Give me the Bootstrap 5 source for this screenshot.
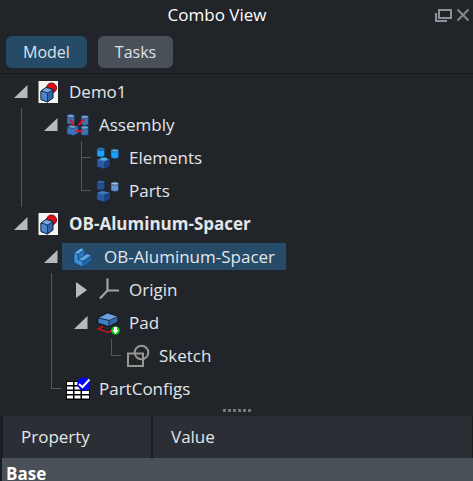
<!DOCTYPE html>
<html lang="en" data-bs-theme="dark">
<head>
<meta charset="utf-8">
<meta name="viewport" content="width=device-width, initial-scale=1">
<title>Combo View</title>
<link href="https://cdn.jsdelivr.net/npm/bootstrap@5.3.0/dist/css/bootstrap.min.css" rel="stylesheet">
<style>
body { background: #212529; color: #e3e6e9; font: 17px/24px "Open Sans", "Noto Sans", sans-serif; }
.dock-title { height: 30px; padding: 0 3px 0 0; }
.dock-title h1 { font-size: 17px; line-height: 24px; font-weight: 400; }
.bare { background: none; border: 0; padding: 0; line-height: 0; }
.tabs { padding: 6px 6px 5px; gap: 11px; border-bottom: 1px solid #171a1d; }
.tabs .btn { height: 32px; padding: 0 17px; border: 0; border-radius: 6px; background: #495057; color: #dee2e6; font-size: 16px; line-height: 32px; }
.tabs .btn.active { background: #264b69; color: #dee2e6; }
.tree { padding: 1px 6px 0; }
.node { height: 33px; }
.cell { width: 30px; height: 33px; flex: none; }
.rail { background: linear-gradient(#54585c, #54585c) 15px 0 / 1px 100% no-repeat; }
.tee { background: linear-gradient(#54585c, #54585c) 15px 0 / 1px 100% no-repeat, linear-gradient(#54585c, #54585c) 15px 16px / 10px 1px no-repeat; }
.end { background: linear-gradient(#54585c, #54585c) 15px 0 / 1px 17px no-repeat, linear-gradient(#54585c, #54585c) 15px 16px / 10px 1px no-repeat; }
.item { gap: 9px; }
.item svg { width: 24px; height: 24px; flex: none; }
.picked { background: #264b69; height: 27px; padding: 0 11px 0 5px; margin-left: -4px; }
.picked svg { margin-left: 4px; }
.grip { gap: 2px; height: 11px; }
.grip i { width: 3px; height: 3px; background: #73777b; }
.props { border-collapse: separate; border-spacing: 0; table-layout: fixed; border-left: 2px solid #1a1d20; }
.props thead th { height: 42px; padding: 0 18px; font-weight: 400; background: #2b2f35; border-left: 1px solid #1a1d20; border-right: 1px solid #1a1d20; }
.props thead th:first-child { width: 150px; }
.props tbody th { height: 32px; padding: 0 4px; background: #495057; color: #fff; font-weight: 700; }
</style>
<script src="https://cdn.jsdelivr.net/npm/bootstrap@5.3.0/dist/js/bootstrap.bundle.min.js"></script>
</head>
<body class="vh-100 overflow-hidden">
<svg class="d-none" aria-hidden="true">
  <symbol id="open" viewBox="0 0 14 14"><path d="M13.500 0V13H0z" fill="#b7babd"/></symbol>
  <symbol id="closed" viewBox="0 0 11 16"><path d="M0 0L11 8 0 16z" fill="#b7babd"/></symbol>
  <symbol id="doc" viewBox="0 0 24 24">
    <path d="M2.500 1H22V23H2.500z" fill="#f3f3f1"/>
    <circle cx="15.500" cy="8" r="5" fill="#db0c12" stroke="#7c0a12"/>
    <path d="M5 11L10 7.500 17 9.500V18L11.500 22 5 19.500z" fill="#3464a4" stroke="#0c1e3a"/>
    <path d="M5 11L10 7.500 17 9.500 11.500 13z" fill="#7aa7d8" stroke="#0c1e3a" stroke-width=".7"/>
    <path d="M11.500 13V22L5 19.500V11z" fill="#4a86cb" stroke="#0c1e3a" stroke-width=".7"/>
  </symbol>
  <symbol id="asm" viewBox="0 0 24 24">
    <g fill="#3f72b4" stroke="#16335c" stroke-width=".6">
      <path d="M1 3V10.500Q5 12.500 8.500 10.500V3z"/><ellipse cx="4.750" cy="3" rx="3.750" ry="1.800" fill="#729fcf"/>
      <path d="M15 4V11.500Q19 13.500 22.500 11.500V4z"/><ellipse cx="18.750" cy="4" rx="3.750" ry="1.800" fill="#729fcf"/>
      <path d="M15 14.500V21.500Q19 23.500 22.500 21.500V14.500z"/><ellipse cx="18.750" cy="14.500" rx="3.750" ry="1.800" fill="#729fcf"/>
      <path d="M1 14L5 12 12.500 13.500V20L7.500 22.500 1 21z"/><path d="M1 14L5 12 12.500 13.500 7.500 15.500z" fill="#729fcf"/>
    </g>
    <path d="M4.500 6.500L7.500 12.500M18 6.500L12.500 12M9.500 17.500L16.500 18.500" stroke="#e0141e" stroke-width="2"/>
  </symbol>
  <symbol id="block" viewBox="0 0 24 24">
    <path d="M1 14L6 12 13.500 13.500V20L8 22.800 1 20.800z" fill="#2a5ba2" stroke="#16335c" stroke-width=".6"/>
    <path d="M1 14L6 12 13.500 13.500 8 15.800z" fill="#4079c2"/>
    <path d="M8 15.800V22.500L13.500 20V13.500z" fill="#1d4480"/>
  </symbol>
  <symbol id="elements" viewBox="0 0 24 24">
    <g stroke="#163f70" stroke-width=".6">
      <path d="M1 3V10Q5 12 8.500 10V3z" fill="#1ba4ff"/><ellipse cx="4.750" cy="3" rx="3.750" ry="1.600" fill="#3d6fa8"/>
      <path d="M15 4.500V11.500Q19 13.500 22.500 11.500V4.500z" fill="#1ba4ff"/><ellipse cx="18.750" cy="4.500" rx="3.750" ry="1.600" fill="#5aa8dd"/>
    </g>
    <use href="#block"/>
    <ellipse cx="8" cy="13" rx="3.500" ry="1.400" fill="#46b4e8"/>
  </symbol>
  <symbol id="parts" viewBox="0 0 24 24">
    <g stroke="#16335c" stroke-width=".6">
      <path d="M1 3V10Q5 12 8.500 10V3z" fill="#24508c"/><ellipse cx="4.750" cy="3" rx="3.750" ry="1.600" fill="#3565a4"/>
      <path d="M15 4.500V11.500Q19 13.500 22.500 11.500V4.500z" fill="#6795cb"/><ellipse cx="18.750" cy="4.500" rx="3.750" ry="1.600" fill="#9dbde0"/>
    </g>
    <use href="#block"/>
  </symbol>
  <symbol id="body" viewBox="0 0 24 24">
    <g stroke="#123f70" stroke-width=".6" stroke-linejoin="round">
      <path d="M3 8L10 3 13.500 4.500V10L16 8.500 20.500 10.500V16L12 22 3 17.500z" fill="#2b72b8"/>
      <path d="M3 8L10 3 13.500 4.500 7 9.500z" fill="#69aae5"/>
      <path d="M7 9.500L13.500 4.500V10L7 14.500z" fill="#2f78c0"/>
      <path d="M7 14.500L16 8.500 20.500 10.500 12 16.500z" fill="#5ea3e2"/>
      <path d="M3 8L7 9.500V14.500L12 16.500V22L3 17.500z" fill="#3d8fdc"/>
      <path d="M12 16.500L20.500 10.500V16L12 22z" fill="#2566a8"/>
    </g>
  </symbol>
  <symbol id="origin" viewBox="0 0 24 24"><path d="M11.500 .500V12.500H23M11.500 12.500L4 20.500" fill="none" stroke="#a3a29e" stroke-width="2.200"/></symbol>
  <symbol id="pad" viewBox="0 0 24 24">
    <path d="M7 15.500L2 18 12 21.500 19 18" fill="none" stroke="#cc1018" stroke-width="1.500"/>
    <path d="M2 7L11.500 2 22 5.500V11L13 15.500 2 12z" fill="#3465a4" stroke="#0b1521"/>
    <path d="M2 7L11.500 2 22 5.500 13 9.500z" fill="#6da0dc" stroke="#0b1521" stroke-width=".7"/>
    <path d="M13 9.500V15.500L2 12V7z" fill="#427fc9" stroke="#0b1521" stroke-width=".7"/>
    <circle cx="19.500" cy="19.500" r="4.300" fill="#12c91a"/><path d="M18 16H21V19H22.500L19.500 23 16.500 19H18z" fill="#fff"/>
  </symbol>
  <symbol id="sketch" viewBox="0 0 24 24"><path d="M2 9.500H17V22H2z" fill="none" stroke="#969692" stroke-width="2"/><circle cx="15.500" cy="8.500" r="6.800" fill="none" stroke="#969692" stroke-width="2"/></symbol>
  <symbol id="sheet" viewBox="0 0 24 24">
    <path d="M0 4H24V23H0z" fill="#000"/>
    <path d="M1 5h6v3H1zM8.500 5h6v3h-6zM16 5h7v3h-7zM1 9.500h6v3H1zM8.500 9.500h6v3h-6zM16 9.500h7v3h-7zM1 14h6v3H1zM8.500 14h6v3h-6zM16 14h7v3h-7zM1 18.500h6v3H1zM8.500 18.500h6v3h-6zM16 18.500h7v3h-7z" fill="#fff"/>
    <path d="M12 3L16 .500 24 1.500V12L19 14 14 12.500 11 8z" fill="#0505f5"/><path d="M13 7L16.500 10 23.500 2.500" fill="none" stroke="#fff" stroke-width="2"/>
  </symbol>
</svg>

<header class="dock-title d-flex align-items-center">
  <h1 class="flex-grow-1 text-center m-0">Combo View</h1>
  <button class="bare me-1" aria-label="Float panel"><svg width="18" height="18" fill="none" stroke="#8b9297"><path d="M5 4H17V12H5z" stroke-width="2"/><path d="M2 7V15H13" stroke-width="2"/></svg></button>
  <button class="bare" aria-label="Close panel"><svg width="14" height="14" stroke="#83888b" stroke-width="2"><path d="M1.500 1.500L12.500 12.500M12.500 1.500L1.500 12.500"/></svg></button>
</header>
<nav class="tabs d-flex" aria-label="Panels">
  <button class="btn active">Model</button>
  <button class="btn">Tasks</button>
</nav>

<main class="tree text-nowrap">
  <div class="node d-flex align-items-center"><button class="cell bare" aria-label="Collapse Demo1"><svg width="14" height="14"><use href="#open"/></svg></button><div class="item d-flex align-items-center"><svg><use href="#doc"/></svg>Demo1</div></div>
  <div class="node d-flex align-items-center"><span class="cell rail"></span><button class="cell bare" aria-label="Collapse Assembly"><svg width="14" height="14"><use href="#open"/></svg></button><div class="item d-flex align-items-center"><svg><use href="#asm"/></svg>Assembly</div></div>
  <div class="node d-flex align-items-center"><span class="cell rail"></span><span class="cell"></span><span class="cell tee"></span><div class="item d-flex align-items-center"><svg><use href="#elements"/></svg>Elements</div></div>
  <div class="node d-flex align-items-center"><span class="cell rail"></span><span class="cell"></span><span class="cell end"></span><div class="item d-flex align-items-center"><svg><use href="#parts"/></svg>Parts</div></div>
  <div class="node d-flex align-items-center"><button class="cell bare" aria-label="Collapse OB-Aluminum-Spacer document"><svg width="14" height="14"><use href="#open"/></svg></button><div class="item d-flex align-items-center fw-bold"><svg><use href="#doc"/></svg>OB-Aluminum-Spacer</div></div>
  <div class="node d-flex align-items-center"><span class="cell"></span><button class="cell bare" aria-label="Collapse OB-Aluminum-Spacer body"><svg width="14" height="14"><use href="#open"/></svg></button><div class="item picked d-flex align-items-center"><svg><use href="#body"/></svg>OB-Aluminum-Spacer</div></div>
  <div class="node d-flex align-items-center"><span class="cell"></span><span class="cell rail"></span><button class="cell bare" aria-label="Expand Origin"><svg width="11" height="16"><use href="#closed"/></svg></button><div class="item d-flex align-items-center"><svg><use href="#origin"/></svg>Origin</div></div>
  <div class="node d-flex align-items-center"><span class="cell"></span><span class="cell rail"></span><button class="cell bare" aria-label="Collapse Pad"><svg width="14" height="14"><use href="#open"/></svg></button><div class="item d-flex align-items-center"><svg><use href="#pad"/></svg>Pad</div></div>
  <div class="node d-flex align-items-center"><span class="cell"></span><span class="cell rail"></span><span class="cell"></span><span class="cell end"></span><div class="item d-flex align-items-center"><svg><use href="#sketch"/></svg>Sketch</div></div>
  <div class="node d-flex align-items-center"><span class="cell"></span><span class="cell end"></span><div class="item d-flex align-items-center"><svg><use href="#sheet"/></svg>PartConfigs</div></div>
</main>

<div class="grip d-flex justify-content-center align-items-center"><i></i><i></i><i></i><i></i><i></i><i></i></div>
<table class="props w-100">
  <thead><tr><th scope="col">Property</th><th scope="col">Value</th></tr></thead>
  <tbody><tr><th colspan="2" scope="rowgroup">Base</th></tr></tbody>
</table>
</body>
</html>
